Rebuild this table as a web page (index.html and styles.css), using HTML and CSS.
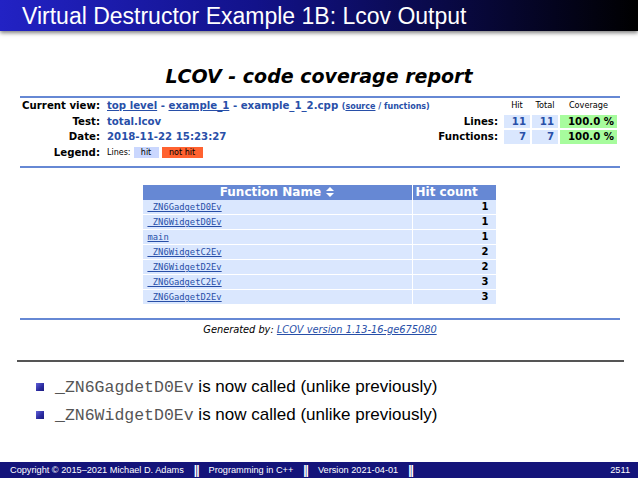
FILE: index.html
```html
<!DOCTYPE html>
<html>
<head>
<meta charset="utf-8">
<link rel="stylesheet" href="styles.css">
</head>
<body>
<header class="titlebar"><h1>Virtual Destructor Example 1B: Lcov Output</h1></header>
<main class="slide">
  <h2 class="lcov-title">LCOV - code coverage report</h2>
  <div class="summary">
    <div class="lbl">Current view:</div>
    <div class="val"><a class="ln">top level</a> - <a class="ln">example_1</a> - example_1_2.cpp <span class="small">(<a class="ln">source</a> / functions)</span></div>
    <div></div>
    <div class="th">Hit</div><div class="th">Total</div><div class="th">Coverage</div>

    <div class="lbl">Test:</div>
    <div class="val">total.lcov</div>
    <div class="rlbl">Lines:</div>
    <div class="num">11</div><div class="num">11</div><div class="cov">100.0 %</div>

    <div class="lbl">Date:</div>
    <div class="val">2018-11-22 15:23:27</div>
    <div class="rlbl">Functions:</div>
    <div class="num">7</div><div class="num">7</div><div class="cov">100.0 %</div>

    <div class="lbl">Legend:</div>
    <div class="legend"><span>Lines:</span><span class="lg-hit">hit</span><span class="lg-miss">not hit</span></div>
    <div></div><div></div><div></div><div></div>
  </div>

  <div class="fntable">
    <div class="fh">Function Name <svg class="sort" width="8" height="10" viewBox="0 0 8 10"><path d="M4 0 L8 4 L0 4 Z M0 6 L8 6 L4 10 Z" fill="#fff"/></svg></div>
    <div class="fh">Hit count</div>
    <div class="fn"><a>_ZN6GadgetD0Ev</a></div><div class="fc">1</div>
    <div class="fn"><a>_ZN6WidgetD0Ev</a></div><div class="fc">1</div>
    <div class="fn"><a>main</a></div><div class="fc">1</div>
    <div class="fn"><a>_ZN6WidgetC2Ev</a></div><div class="fc">2</div>
    <div class="fn"><a>_ZN6WidgetD2Ev</a></div><div class="fc">2</div>
    <div class="fn"><a>_ZN6GadgetC2Ev</a></div><div class="fc">3</div>
    <div class="fn"><a>_ZN6GadgetD2Ev</a></div><div class="fc">3</div>
  </div>

  <div class="generated">Generated by: <a>LCOV version 1.13-16-ge675080</a></div>

  <div class="divider"></div>

  <ul class="bullets">
    <li><span class="sq"></span><span><code>_ZN6GagdetD0Ev</code> is now called (unlike previously)</span></li>
    <li><span class="sq"></span><span><code>_ZN6WidgetD0Ev</code> is now called (unlike previously)</span></li>
  </ul>
</main>
<footer class="footer">
  <span>Copyright © 2015–2021 Michael D. Adams</span>
  <span class="sep">||</span>
  <span>Programming in C++</span>
  <span class="sep">||</span>
  <span>Version 2021-04-01</span>
  <span class="sep">||</span>
  <span class="page">2511</span>
</footer>
</body>
</html>
```

FILE: styles.css
```css
* { box-sizing: border-box; }
html, body { margin: 0; padding: 0; }
body {
  width: 638px;
  height: 478px;
  overflow: hidden;
  background: #fff;
  display: flex;
  flex-direction: column;
  font-family: "Liberation Sans", Arial, sans-serif;
}

.titlebar {
  height: 31px;
  flex: none;
  background: linear-gradient(to right, #2222c4 0%, #12128a 40%, #000 100%);
  box-shadow: 0 2px 4px rgba(0,0,0,0.5);
  position: relative;
  z-index: 1;
}
.titlebar h1 {
  margin: 0;
  padding: 1px 0 0 22px;
  font-family: "Liberation Sans", Arial, sans-serif;
  font-weight: normal;
  font-size: 23px;
  line-height: 30px;
  color: #fff;
  white-space: nowrap;
}

.slide {
  flex: 1;
  display: flex;
  flex-direction: column;
  font-family: "DejaVu Sans", sans-serif;
}

.lcov-title {
  margin: 34px 0 0;
  text-align: center;
  font-family: "DejaVu Sans", sans-serif;
  font-size: 19px;
  line-height: 22px;
  font-style: italic;
  font-weight: bold;
  color: #000;
}

.summary {
  margin: 9px 18px 0 20px;
  border-top: 2px solid #6688d4;
  border-bottom: 2px solid #6688d4;
  padding: 1px 3px 7px 0;
  display: grid;
  grid-template-columns: 85px 1fr auto 26px 26px 57px;
  grid-auto-rows: 13.5px;
  column-gap: 2px;
  row-gap: 2px;
  font-size: 10.2px;
  line-height: 13.5px;
  white-space: nowrap;
}
.summary a.ln { color: #284fa8; text-decoration: underline; }
.lbl { text-align: right; padding-right: 5px; font-weight: bold; color: #000; }
.val { color: #284fa8; font-weight: bold; }
.val .small { font-size: 8px; }
.rlbl { text-align: right; padding-right: 4px; font-weight: bold; color: #000; }
.th { text-align: center; font-size: 8.2px; color: #000; }
.num { background: #dae7fe; color: #284fa8; font-weight: bold; text-align: right; padding-right: 4px; }
.cov { background: #a7fc9d; color: #000; font-weight: bold; text-align: right; padding-right: 3px; }
.legend { display: flex; align-items: center; font-size: 8px; color: #000; }
.legend span { line-height: 11px; }
.legend .lg-hit { margin-left: 3px; background: #cad7fe; padding: 0 7px; width: 25px; text-align: center; }
.legend .lg-miss { margin-left: 3px; background: #ff6230; padding: 0 6px; width: 41px; text-align: center; }

.fntable {
  margin: 17px auto 0;
  width: 353px;
  display: grid;
  grid-template-columns: 269px 83px;
  column-gap: 1px;
  row-gap: 1px;
  grid-auto-rows: 14px;
}
.fntable .fh {
  background: #6688d4;
  color: #fff;
  font-weight: bold;
  font-size: 12px;
  line-height: 15px;
  height: 15px;
  text-align: center;
  white-space: nowrap;
}
.fntable .fh:nth-child(2) { text-align: left; padding-left: 3px; }
.sort { vertical-align: -1px; margin-left: 1px; }
.fntable .fn {
  background: #dae7fe;
  padding-left: 5px;
  font-family: "DejaVu Sans Mono", monospace;
  font-size: 8.8px;
  line-height: 14px;
}
.fntable .fn a { color: #284fa8; text-decoration: underline; }
.fntable .fc {
  background: #dae7fe;
  text-align: right;
  padding-right: 7px;
  font-weight: bold;
  font-size: 10px;
  line-height: 14px;
  color: #000;
}

.generated {
  margin: 14px 18px 0 20px;
  border-top: 2px solid #6688d4;
  padding-top: 3px;
  text-align: center;
  font-style: italic;
  font-size: 9.8px;
  line-height: 14px;
  color: #000;
}
.generated a { color: #284fa8; text-decoration: underline; }

.divider {
  margin: 23px 14px 0 17px;
  height: 2px;
  background: #555;
}

.bullets {
  list-style: none;
  margin: 11px 0 0;
  padding: 0 0 0 36px;
  font-family: "Liberation Sans", Arial, sans-serif;
  font-size: 17px;
  line-height: 27px;
  color: #000;
}
.bullets li { display: flex; align-items: center; gap: 11px; }
.bullets .sq {
  width: 8px;
  height: 8px;
  flex: none;
  background: linear-gradient(135deg, #6060d8, #2a2a9e 60%, #1c1c80);
}
.bullets code {
  font-family: "Liberation Mono", monospace;
  font-size: 16.5px;
  color: #555;
}

.footer {
  flex: none;
  height: 16px;
  background: #14147a;
  color: #fff;
  display: flex;
  align-items: center;
  gap: 10px;
  padding: 0 8px 0 10px;
  font-family: "Liberation Sans", Arial, sans-serif;
  font-size: 9.2px;
  white-space: nowrap;
}
.footer .sep { font-weight: bold; font-size: 12px; letter-spacing: -1px; }
.footer .page { margin-left: auto; }
```
